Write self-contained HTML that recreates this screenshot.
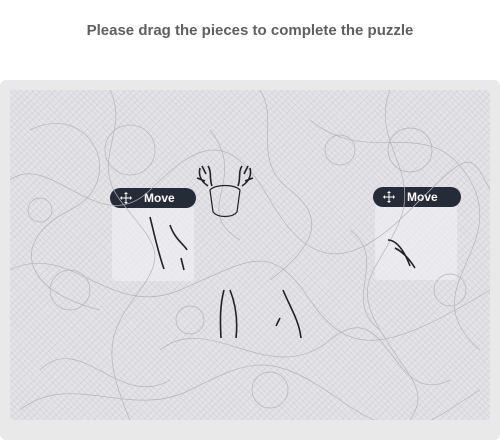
<!DOCTYPE html>
<html><head><style>
body{margin:0;width:500px;height:430px;background:#fff;font-family:"Liberation Sans",sans-serif;overflow:hidden;position:relative}
h1{position:absolute;top:22px;left:0;width:500px;text-align:center;font-size:15px;font-weight:bold;color:#5f5f5f;margin:0}
.panel{position:absolute;left:0;top:80px;width:500px;height:360px;background:#e9e9e9;border-radius:6px}
.img{position:absolute;left:10px;top:90px;width:480px;height:330px;border-radius:4px;overflow:hidden;
background:repeating-linear-gradient(45deg,#d8d8de 0 1px,#e4e4e8 1px 4px),#e3e3e7}
.img::after{content:"";position:absolute;inset:0;background:repeating-linear-gradient(-45deg,rgba(205,195,195,.4) 0 1px,transparent 1px 5px)}
.piece{position:absolute;background:rgba(242,242,245,.6);border-radius:4px}
.move{position:absolute;height:20px;background:#262b38;color:#fff;border-radius:10px;font-size:12px;font-weight:bold;line-height:20px;box-sizing:border-box}
.move svg{position:absolute;left:10px;top:4px}
.move b{position:absolute;left:34px}
svg{position:absolute;z-index:3}
</style></head><body>
<h1>Please drag the pieces to complete the puzzle</h1>
<div class="panel"></div>
<div class="img">
<svg width="480" height="330" style="left:0;top:0;z-index:1" fill="none" stroke="#b4b4b8" stroke-width=".7">
<path d="M20 40 C80 10 120 90 60 120 S10 200 90 220"/><path d="M300 30 C360 80 420 20 460 90 S400 200 470 260"/>
<path d="M150 260 C200 220 260 300 320 250 S380 320 440 290"/><path d="M30 280 C70 240 110 320 160 290"/>
<path d="M200 40 C240 90 180 120 230 150"/><path d="M340 140 C380 170 330 210 370 240"/>
<path d="M0 90 C40 60 90 150 140 100 S220 40 260 110 S340 180 400 120 S460 60 480 100"/>
<path d="M0 180 C60 150 100 230 170 200 S260 150 300 210 S380 260 480 200"/>
<path d="M10 320 C60 280 120 330 180 300 S260 260 330 310 S420 330 470 300"/>
<path d="M100 0 C120 40 80 70 110 110 S160 160 130 200 S90 260 120 330"/>
<path d="M380 0 C360 50 410 80 390 130 S340 190 370 240 S420 300 400 330"/>
<path d="M250 0 C270 30 240 70 280 100 S300 160 260 190"/>
<circle cx="120" cy="60" r="25"/><circle cx="400" cy="60" r="22"/><circle cx="60" cy="200" r="20"/><circle cx="260" cy="300" r="18"/>
<circle cx="330" cy="60" r="15"/><circle cx="180" cy="230" r="14"/><circle cx="440" cy="200" r="16"/><circle cx="30" cy="120" r="12"/>
</svg>
</div>
<div class="piece" style="left:112px;top:205px;width:82px;height:76px"></div>
<div class="piece" style="left:375px;top:205px;width:82px;height:75px"></div>
<svg width="500" height="430" style="left:0;top:0" fill="none" stroke="#222" stroke-width="1.6">
<path d="M200 168 c-2 8 2 14 8 18 M197 178 l8 3 M202 166 l4 8 M250 168 c2 8 -2 14 -8 18 M253 178 l-8 3 M248 166 l-4 8 M212 186 c-3 -8 0 -14 -4 -20 M238 186 c3 -8 0 -14 4 -20"/>
<path d="M210 190 c5 -6 25 -6 30 0 l-3 22 c-5 6 -19 6 -24 0 z" stroke-width="1.2"/>
<path d="M150 217 c5 20 8 35 14 52 M170 225 c5 15 15 20 17 25 M181 258 l3 12"/>
<path d="M224 290 c-4 15 -4 30 -3 48 M230 290 c6 15 8 30 6 48 M283 290 c6 15 16 30 18 48 M280 318 l-4 8"/>
<path d="M388 240 c10 0 18 15 22 26 M395 248 c8 4 15 12 20 20"/>
</svg>
<div class="move" style="left:110px;top:188px;width:86px"><svg width="12" height="12" viewBox="0 0 12 12" fill="#fff" stroke="#fff" stroke-width="1"><path d="M6 1v10M1 6h10"/><path d="M6 0l2 2H4zM6 12l2-2H4zM0 6l2 2V4zM12 6l-2 2V4z" stroke="none"/></svg><b>Move</b></div>
<div class="move" style="left:373px;top:187px;width:88px"><svg width="12" height="12" viewBox="0 0 12 12" fill="#fff" stroke="#fff" stroke-width="1"><path d="M6 1v10M1 6h10"/><path d="M6 0l2 2H4zM6 12l2-2H4zM0 6l2 2V4zM12 6l-2 2V4z" stroke="none"/></svg><b>Move</b></div>
</body></html>
